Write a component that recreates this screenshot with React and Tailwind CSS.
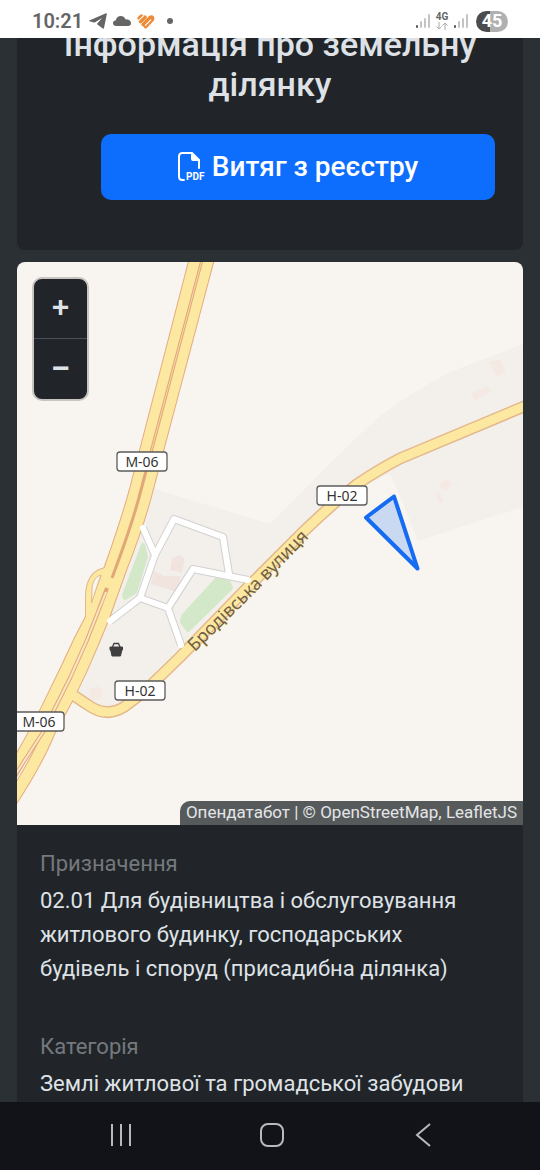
import React, { useState } from 'react';

const details = [
  { label: 'Призначення', value: '02.01 Для будівництва і обслуговування житлового будинку, господарських будівель і споруд (присадибна ділянка)' },
  { label: 'Категорія', value: 'Землі житлової та громадської забудови' },
];

// map roads, in map canvas units
const leftLane = 'M196 256 L194.5 262 L135.5 490 Q126 524 111 566 L92 617 L80 640 L66 670 L46 711 Q34 735 24 752 L8 780';
const rightLane = 'M209 256 L207.5 262 L147 490 Q139 522 121 568 L103.5 617 L94 640 L81 670 L68 697 L49 732 Q37 762 8 806';
const median = 'M203 256 L201.5 262 L141 490 Q133 522 112 578';
const gap = 'M107 588 L98 612 L87 640 L70 678 L43 732 L10 783';
const ramp = 'M106 571 Q90 574 89 595 L89 622';
const regional = 'M70 693 L88 705 Q106 718 124 707 Q136 698 146 690 L180 657 L252 583 L303 532 Q330 506 356 485 Q376 471 400 458.5 L530 404';
const street = 'M194 653 L254 594 L326 520';
const alleys = [
  'M143 528 L155 555',
  'M140 598 L155 555 L174 519 L223 537 L229 574',
  'M110 621 L140 598 L168 608 L193 569 L248 580',
  'M168 608 L181 645',
];
const shields = [
  { text: 'М-06', x: 117, y: 452 },
  { text: 'Н-02', x: 317, y: 486 },
  { text: 'Н-02', x: 115, y: 681 },
  { text: 'М-06', x: 14, y: 712 },
];

function Signal({ className }) {
  return (
    <svg viewBox="0 0 14 14" className={className} fill="#c4c4c4">
      <rect x="0" y="11" width="2" height="3" rx="1" fill="#555" />
      <rect x="4" y="7" width="2" height="7" rx="1" />
      <rect x="8" y="4" width="2" height="10" rx="1" />
      <rect x="12" y="0" width="2" height="14" rx="1" />
    </svg>
  );
}

function StatusBar() {
  return (
    <header className="relative z-10 flex h-[38px] shrink-0 items-center justify-between bg-white pt-1 pr-8 pl-8 text-[#656565]">
      <div className="flex items-center">
        <span className="text-xl leading-6 font-semibold">10:21</span>
        <svg viewBox="0 0 18 16" className="ml-[6px] h-4 w-[18px]" fill="currentColor">
          <path d="M0.300 7.600 L17 0.200 Q18 0 17.800 1.200 L15 15 Q14.700 16 13.800 15.400 L8.400 11.500 Q7.800 11 8.300 10.500 L13 5 L6.200 9.300 Q5.700 9.600 5 9.400 L0.400 8.300 Q-0.200 8 0.300 7.600 Z" />
        </svg>
        <svg viewBox="0 0 18 10" className="ml-[6px] h-[10px] w-[18px]" fill="currentColor">
          <path d="M3.2 10C1.3 10 0 8.8 0 7.2 0 5.700 1 4.700 2.600 4.500 3.200 1.800 5.200 0 7.700 0c2.200 0 3.900 1.200 4.700 3.200C15.500 3 18 4.500 18 7.200 18 8.900 16.800 10 15 10z" />
        </svg>
        <svg viewBox="0 0 18 15" className="ml-[6px] h-[15px] w-[18px]" fill="none" strokeLinecap="round">
          <path d="M2.300 4.200 L4.500 2.200 M3.500 7.500 L8 3.200" stroke="#ee8a35" strokeWidth="3.600" />
          <path d="M6.300 10.500 L13.500 3.300 Q16 2.500 15.300 5.500 L8.700 12.500" stroke="#ee8a35" strokeWidth="3.800" strokeLinejoin="round" />
          <path d="M1.500 6.600 L6.200 2.200 M8.300 11.300 L13.800 5.800" stroke="#fff" strokeWidth="1.100" />
        </svg>
        <span className="ml-3 size-[6px] rounded-full bg-[#656565]" />
      </div>
      <div className="flex items-center">
        <Signal className="size-[14px]" />
        <span className="ml-1 flex w-4 flex-col items-center">
          <span className="text-[10px] leading-[10px] font-bold">4G</span>
          <svg viewBox="0 0 12 8" className="h-2 w-3" fill="none" stroke="#aaa">
            <path d="M3 0 V7 M0.500 4.500 L3 7 L5.500 4.500 M9 8 V1 M6.500 3.500 L9 1 L11.500 3.500" />
          </svg>
        </span>
        <Signal className="ml-1 size-[14px]" />
        <span className="ml-2 flex h-[21px] w-8 items-center justify-center rounded-full bg-linear-to-r from-[#4c4c4c] from-45% to-[#b0b0b0] to-45% text-lg font-bold text-white">45</span>
      </div>
    </header>
  );
}

function PdfIcon() {
  return (
    <svg viewBox="0 0 28 30" className="h-[30px] w-7 shrink-0" fill="none" stroke="currentColor" strokeWidth="2">
      <path d="M6 28 H4.500 Q1 28 1 24.500 V4.500 Q1 1 4.500 1 H14 L21 8 V16" strokeLinecap="round" />
      <path d="M13 1 L21 9 H15 Q13 9 13 7 Z" fill="currentColor" stroke="none" />
      <text x="8" y="28" fill="currentColor" stroke="none" className="text-[10px] font-bold">PDF</text>
    </svg>
  );
}

function MapCanvas() {
  return (
    <svg viewBox="17 262 506 563" preserveAspectRatio="xMidYMid slice" className="block size-full bg-[#f8f4ef]">
      <path d="M152 488 L270 524 L300 494 Q330 462 380 416 Q415 390 450 372 L523 344 V507 L418 541 L400 496 L390 474 L356 488 L180 660 L125 706 L96 712 L70 693 Z" fill="#f3f0ec" />

      <g fill="#f1e4df">
        <path d="M172 558 L179 555 L185 559 L182 573 L170 570 Z" />
        <path d="M154 571 L164 576 L181 576 L177 592 L151 584 Z" />
      </g>
      <g fill="#f5e9e4">
        <path d="M489 362 L500 359 L506 372 L496 377 Z" />
        <path d="M471 393 L487 386 L491 391 L475 401 Z" />
        <path d="M440 484 L449 478 L452 484 L446 491 L441 488 Z" />
        <path d="M435 494 L439 492 L444 502 L440 503 Z" />
        <path d="M90 689 L98 686 L103 691 L102 699 L93 701 L89 696 Z" />
      </g>

      <g fill="#d3e8c8" stroke="#d3e8c8" strokeWidth="4" strokeLinejoin="round">
        <path d="M143 545 L146 557 L135 592 L125 598 L124 595 Z" />
        <path d="M217 579 L229 583 L231 588 L188 630 L182 622 L183 616 Z" />
      </g>

      <g fill="none" strokeLinejoin="round">
        {alleys.map((d) => <path key={d} d={d} stroke="#d2d0d0" strokeWidth="8" />)}

        <path d={regional} stroke="#e4b88c" strokeWidth="12" />
        <path d={ramp} stroke="#e4b88c" strokeWidth="8" />
        <path d={leftLane} stroke="#e4ac80" strokeWidth="13" />
        <path d={rightLane} stroke="#e4ac80" strokeWidth="13" />
        <path d={ramp} stroke="#fce8a0" strokeWidth="6" strokeLinecap="round" />
        <path d={leftLane} stroke="#fce8a0" strokeWidth="11" />
        <path d={rightLane} stroke="#fce8a0" strokeWidth="11" />
        <path d={regional} stroke="#fce8a0" strokeWidth="9" />

        {/* strip between the two carriageways */}
        <path d={median} stroke="#e2a777" strokeWidth="3" />
        <path d="M203 256 L201.5 262 L150 456" stroke="#f6d9a8" />
        <path d={gap} stroke="#e2a777" strokeWidth="4" />
        <path d="M106 592 L98 612 L87 640 L70 678 L43 732 L10 783" stroke="#f8e6c4" strokeWidth="2" />
        <path d="M101 575 Q93 577 92 588 L91.500 603 Q95 592 101 575 Z" fill="#f8f4ef" stroke="#e4b88c" />

        {alleys.map((d) => <path key={d} d={d} stroke="#fff" strokeWidth="6" strokeLinecap="round" />)}
      </g>

      <path id="street-line" d={street} fill="none" />
      <text className="font-['Noto_Sans',sans-serif] text-[18px]" fill="#705f45" stroke="#fce8a0" strokeWidth="1" paintOrder="stroke">
        <textPath href="#street-line" startOffset="1">Бродівська вулиця</textPath>
      </text>

      {shields.map((s) => (
        <g key={`${s.x}-${s.y}`}>
          <rect x={s.x} y={s.y} width="50" height="19" rx="3" fill="#fff" stroke="#5c5c5c" strokeWidth="1.300" />
          <text x={s.x + 25} y={s.y + 15} textAnchor="middle" fill="#333" className="font-['Noto_Sans',sans-serif] text-[14px]">{s.text}</text>
        </g>
      ))}

      {/* shop */}
      <path d="M110 647 H122.500 V650 H121.800 L120.500 656 H112 L110.700 650 H110 Z" fill="#3f3f3f" stroke="#3f3f3f" strokeLinejoin="round" />
      <path d="M112.500 647 L114 643.500 H118.500 L120 647" fill="none" stroke="#3f3f3f" strokeWidth="1.300" />

      {/* land plot */}
      <path d="M394 496.500 L366 517.500 L417.500 568.500 Z" fill="#0d6efd" fillOpacity="0.2" stroke="#156bf2" strokeWidth="4" strokeLinejoin="round" />
    </svg>
  );
}

function PlotMap() {
  const [zoom, setZoom] = useState(16);
  return (
    <section data-zoom={zoom} className="relative mt-3 aspect-[506/563] overflow-hidden rounded-t-lg">
      <MapCanvas />
      <div className="absolute top-[15px] left-[15px] flex w-[57px] flex-col overflow-hidden rounded-[10px] border-2 border-[#c7c4c1] bg-[#212529] font-['Liberation_Mono',monospace] text-[30px] font-bold text-[#dee2e6]">
        <button onClick={() => setZoom(zoom + 1)} aria-label="Збільшити" className="h-[60px] border-b border-[#495057] pt-[2px]">+</button>
        <button onClick={() => setZoom(zoom - 1)} aria-label="Зменшити" className="h-[60px] pt-[2px]">−</button>
      </div>
      <div className="absolute right-0 bottom-0 rounded-tl-[10px] bg-[#575a5b] px-[6px] pb-px text-[17px] leading-[23px] whitespace-nowrap text-[#e3e5e8]">
        <a href="#opendatabot">Опендатабот</a> | © <a href="#osm">OpenStreetMap</a>, <a href="#leaflet">LeafletJS</a>
      </div>
    </section>
  );
}

function NavBar() {
  return (
    <nav className="relative z-10 flex h-[68px] shrink-0 items-center justify-around bg-[#121318] pr-[42px] pb-[3px] pl-[45px] text-[#b8b9bb]">
      <button aria-label="Останні">
        <svg viewBox="0 0 24 24" className="size-6" fill="none" stroke="currentColor" strokeWidth="2">
          <path d="M3 1 V23 M12 1 V23 M21 1 V23" />
        </svg>
      </button>
      <button aria-label="Головний екран">
        <svg viewBox="0 0 24 24" className="size-6" fill="none" stroke="currentColor" strokeWidth="2">
          <rect x="1" y="1" width="22" height="22" rx="7" />
        </svg>
      </button>
      <button aria-label="Назад">
        <svg viewBox="0 0 24 24" className="size-6" fill="none" stroke="currentColor" strokeWidth="2">
          <path d="M19 1 L6 12 L19 23" />
        </svg>
      </button>
    </nav>
  );
}

export default function App() {
  return (
    <div className="flex h-screen flex-col bg-[#2b3035] font-[Roboto,sans-serif] text-[#dee2e6]">
      <StatusBar />

      <main className="min-h-0 flex-1 overflow-hidden px-[17px]">
        <section className="rounded-b-lg bg-[#212529] pb-[50px]">
          <h1 className="-mt-[14px] px-10 text-center text-[34px] leading-[40px] font-medium">Інформація про земельну ділянку</h1>
          <div className="pt-[30px] pr-7 pl-[84px]">
            <button className="flex h-[66px] w-full items-center justify-center gap-[6px] rounded-[10px] bg-[#0d6efd] text-[28px] font-medium text-white">
              <PdfIcon />
              Витяг з реєстру
            </button>
          </div>
        </section>

        <PlotMap />

        <dl className="bg-[#212529] pt-[22px] pr-12 pl-[23px] text-[22px] leading-[34px]">
          {details.map((d) => (
            <div key={d.label} className="pb-11">
              <dt className="text-[#75797d]">{d.label}</dt>
              <dd className="mt-[3px]">{d.value}</dd>
            </div>
          ))}
        </dl>
      </main>

      <NavBar />
    </div>
  );
}
